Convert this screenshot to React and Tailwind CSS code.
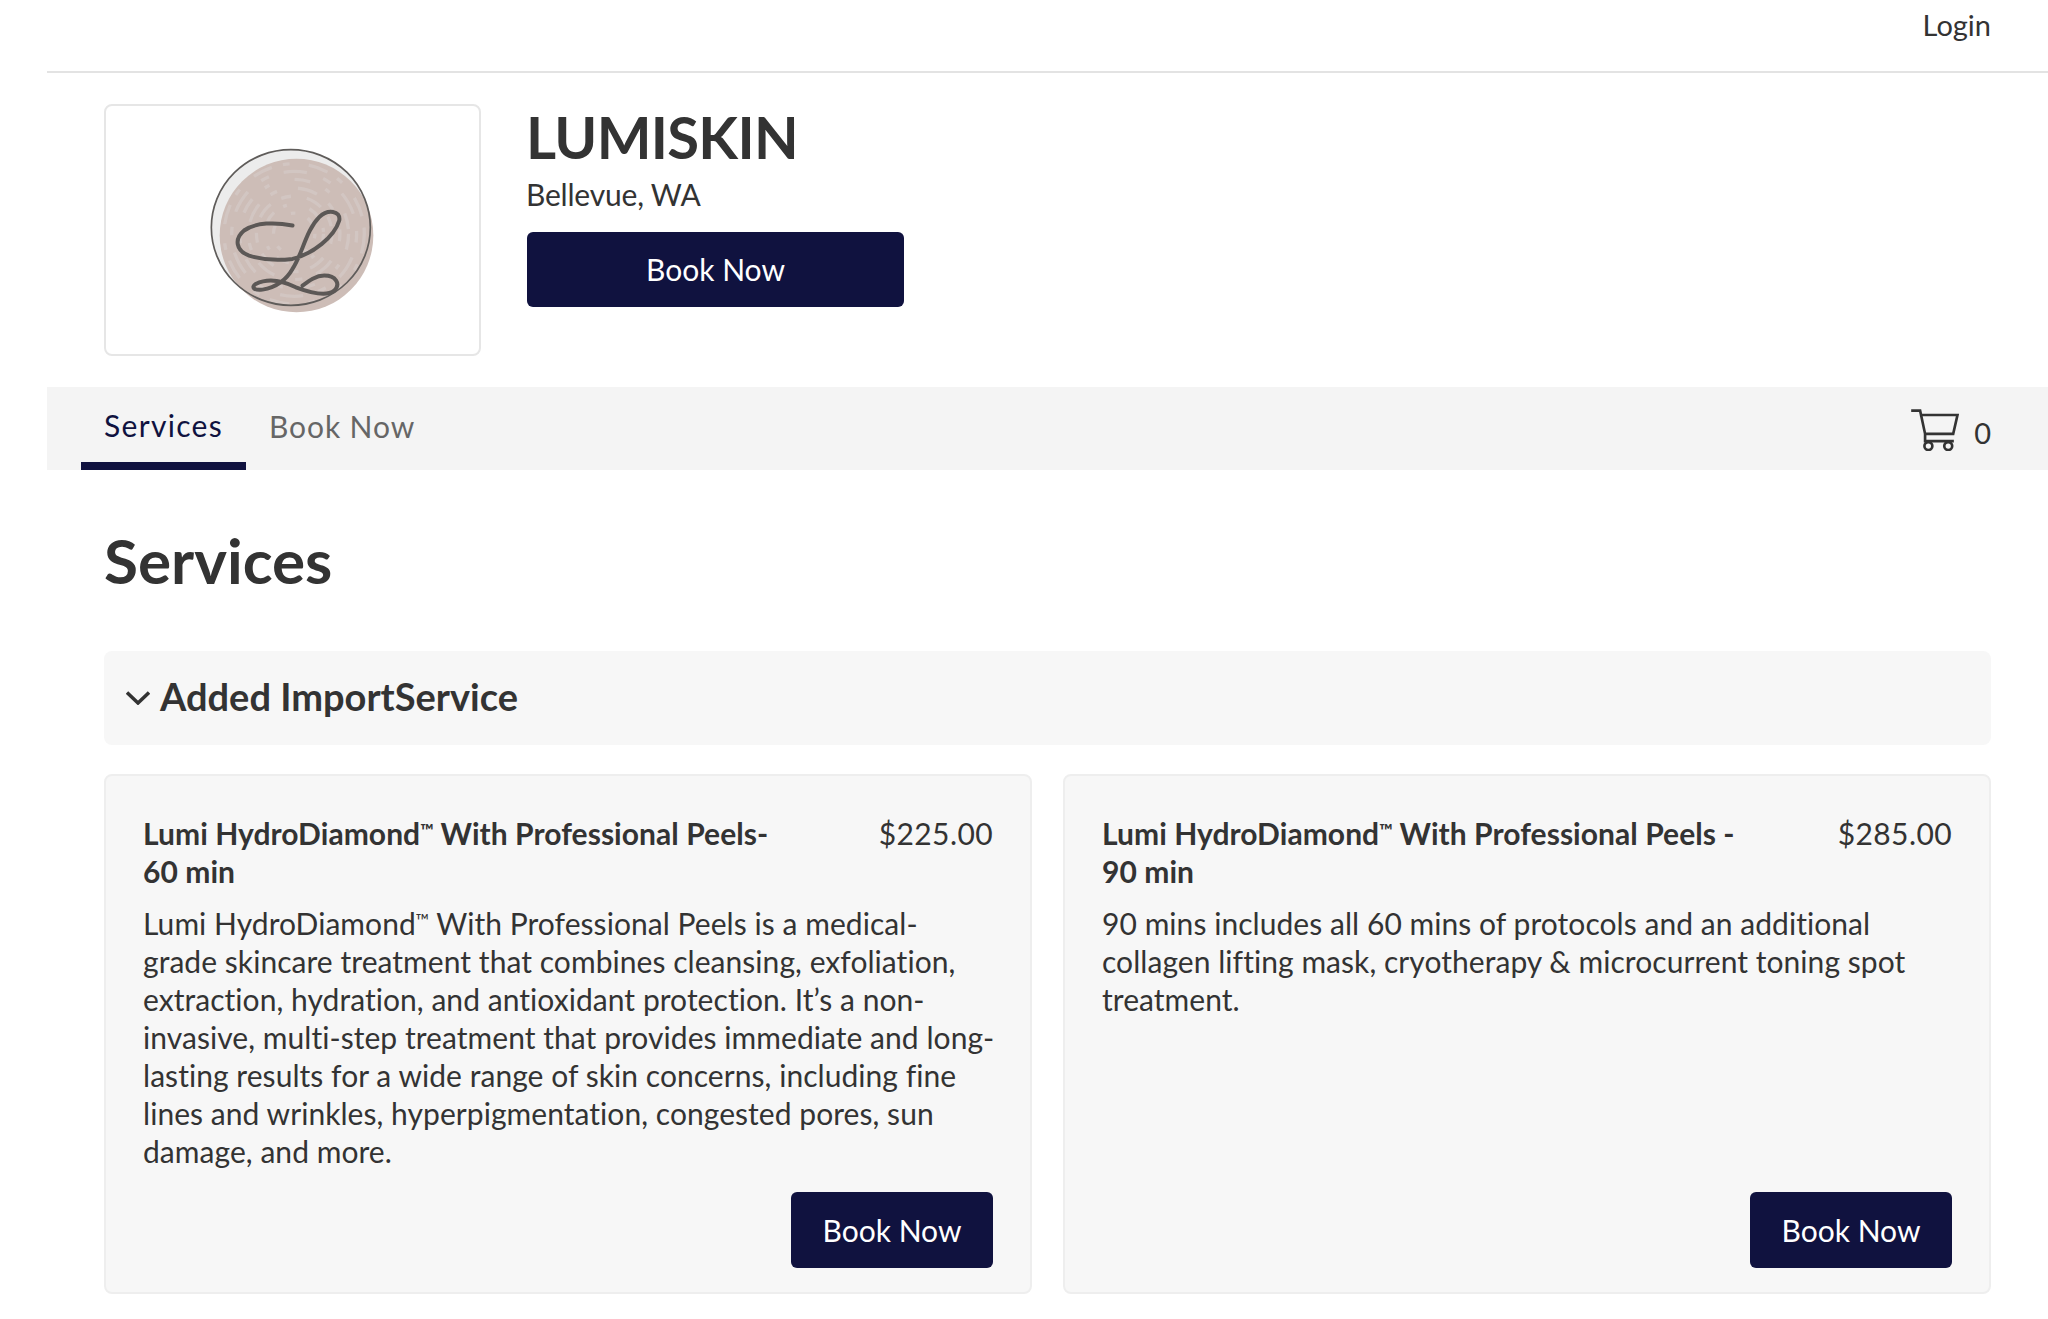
import React from "react";

const F = "font-['Lato','Liberation_Sans',sans-serif]";

const RINGS = [
  [62, "14 40 26 60"],
  [88, "40 32 12 70"],
  [113, "30 48 50 36"],
  [137, "22 64 60 44"],
  [163, "48 50 16 78"],
  [187, "26 46 70 52"],
  [210, "60 34 20 58"],
];

function Logo() {
  return (
    <svg viewBox="360 170 500 500" className="w-[167px] h-[167px]">
      <ellipse cx="605" cy="411" rx="238" ry="233" fill="#ececec" />
      <ellipse cx="622" cy="435" rx="230" ry="230" fill="#cdbdb7" />
      {RINGS.map(([r, d]) => (
        <circle key={r} cx="615" cy="430" r={r} fill="none" stroke="#d6ccc9" strokeWidth="10" strokeDasharray={d} opacity="0.6" />
      ))}
      <ellipse cx="605" cy="411" rx="238" ry="233" fill="none" stroke="#5f5c5a" strokeWidth="5" />
      <path d="M610 405 C560 395 500 395 465 420 C435 445 440 480 480 495 C520 508 570 510 610 505 C670 490 735 440 750 390 C755 360 715 355 690 380 C650 420 640 490 610 535 C590 570 560 590 520 597 C495 600 485 590 500 580 C540 560 580 570 620 590 C660 605 710 620 735 600 C755 580 740 555 705 555 C680 555 660 570 640 585" fill="none" stroke="#5c5856" strokeWidth="12" strokeLinecap="round" />
    </svg>
  );
}

function Cart() {
  return (
    <svg viewBox="90 85 150 127" className="w-[50px] h-[42px]" fill="none" stroke="#333333" strokeWidth="8">
      <path d="M93 90 H120 L135 160 V182 H222 M119 103 H233 L220 160 H135" />
      <circle cx="145" cy="197" r="12" />
      <circle cx="205" cy="197" r="12" />
    </svg>
  );
}

function Chevron() {
  return (
    <svg viewBox="0 0 24 14" className="w-[24px] h-[14px]" fill="none" stroke="#333333" strokeWidth="3.5">
      <path d="M1 1.5 L12 12 L23 1.5" />
    </svg>
  );
}

function Line({ text }) {
  const parts = text.split("™");
  if (parts.length === 1) return <div className="whitespace-nowrap">{text}</div>;
  return (
    <div className="whitespace-nowrap">
      {parts[0]}
      <span className="text-[18px] leading-none relative top-[-8px] tracking-[-0.5px]">™</span>
      {parts[1]}
    </div>
  );
}

function Card({ title, price, lines }) {
  return (
    <div className="h-[520px] rounded-lg border-2 border-[#eeeeee] bg-[#f7f7f7] pt-[38px] pb-[24px] px-[37px] flex flex-col justify-between">
      <div className="text-[30px] leading-[38px] tracking-[0.05px]">
        <div className="flex justify-between">
          <div className="font-bold">
            {title.map((t) => (
              <Line key={t} text={t} />
            ))}
          </div>
          <div className="tracking-[0.4px]">{price}</div>
        </div>
        <div className="mt-[14px]">
          {lines.map((t) => (
            <Line key={t} text={t} />
          ))}
        </div>
      </div>
      <div className="flex justify-end">
        <button className="w-[202px] h-[76px] rounded-md bg-[#10123f] text-white text-[30px]">Book Now</button>
      </div>
    </div>
  );
}

export default function App() {
  return (
    <div className={`${F} bg-white text-[#333333] pl-[47px] h-[1319px] overflow-hidden`}>
      <div className="h-[73px] border-b-2 border-[#e3e3e3] pr-[57px] flex justify-end pt-[6px]">
        <span className="text-[29px] leading-[38px]">Login</span>
      </div>
      <div className="pl-[57px] pt-[31px] pb-[31px] flex gap-[46px]">
        <div className="w-[377px] h-[252px] rounded-lg border-2 border-[#e6e6e6] flex items-center justify-center">
          <Logo />
        </div>
        <div className="w-[377px]">
          <h1 className="text-[58px] leading-[66px] font-bold tracking-[-0.7px] -ml-[1px]">LUMISKIN</h1>
          <div className="text-[30px] leading-[38px] mt-[5px] tracking-[-0.2px] -ml-[1px]">Bellevue, WA</div>
          <button className="mt-[19px] w-full h-[75px] rounded-md bg-[#10123f] text-white text-[30px]">Book Now</button>
        </div>
      </div>
      <div className="h-[83px] bg-[#f4f4f4] flex justify-between pr-[57px]">
        <div className="flex pl-[34px] text-[30px]">
          <div className="w-[165px] border-b-[8px] border-[#10123f] text-center pt-[19px] leading-[38px] tracking-[1.3px] text-[#10123f]">Services</div>
          <div className="ml-[23px] pt-[20px] leading-[38px] tracking-[0.9px] text-[#666666]">Book Now</div>
        </div>
        <div className="flex items-center gap-[14px] pt-[2px] text-[29px]">
          <Cart />
          <span className="pt-[6px]">0</span>
        </div>
      </div>
      <div className="pl-[57px] pr-[57px]">
        <h2 className="text-[62px] leading-[66px] font-bold mt-[57px]">Services</h2>
        <div className="mt-[58px] h-[94px] rounded-lg bg-[#f7f7f7] flex items-center pl-[22px] gap-[10px]">
          <Chevron />
          <span className="text-[38px] font-bold pb-[3px]">Added ImportService</span>
        </div>
        <div className="mt-[29px] grid grid-cols-2 gap-[31px]">
          <Card
            title={["Lumi HydroDiamond™ With Professional Peels-", "60 min"]}
            price="$225.00"
            lines={[
              "Lumi HydroDiamond™ With Professional Peels is a medical-",
              "grade skincare treatment that combines cleansing, exfoliation,",
              "extraction, hydration, and antioxidant protection. It’s a non-",
              "invasive, multi-step treatment that provides immediate and long-",
              "lasting results for a wide range of skin concerns, including fine",
              "lines and wrinkles, hyperpigmentation, congested pores, sun",
              "damage, and more.",
            ]}
          />
          <Card
            title={["Lumi HydroDiamond™ With Professional Peels -", "90 min"]}
            price="$285.00"
            lines={[
              "90 mins includes all 60 mins of protocols and an additional",
              "collagen lifting mask, cryotherapy & microcurrent toning spot",
              "treatment.",
            ]}
          />
        </div>
      </div>
    </div>
  );
}
